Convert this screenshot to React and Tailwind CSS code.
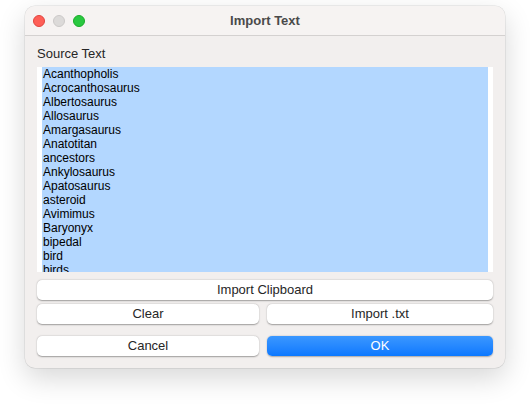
import React from 'react';

const words = [
  'Acanthopholis',
  'Acrocanthosaurus',
  'Albertosaurus',
  'Allosaurus',
  'Amargasaurus',
  'Anatotitan',
  'ancestors',
  'Ankylosaurus',
  'Apatosaurus',
  'asteroid',
  'Avimimus',
  'Baryonyx',
  'bipedal',
  'bird',
  'birds',
  'Brachiosaurus',
];

const font = { fontFamily: '"Liberation Sans", Arial, sans-serif' };

const Btn = ({ children, className = '' }) => (
  <div
    className={`h-[20px] rounded-[5px] bg-white flex items-center justify-center text-[13px] text-[#262626] shadow-[0_0.5px_1.5px_rgba(0,0,0,0.35)] ${className}`}
  >
    {children}
  </div>
);

const App = () => {
  return (
    <div className="w-[530px] h-[411px] bg-white pt-[6px] pl-[25px]" style={font}>
      <div className="w-[480px] h-[362px] rounded-[10px] bg-[#f2efee] shadow-[0_10px_28px_rgba(0,0,0,0.16),0_0_0_0.5px_rgba(0,0,0,0.12)] overflow-hidden flex flex-col">
        {/* title bar */}
        <div className="relative h-[30px] bg-[#f6f3f2] border-b border-[#d4d1d0] flex items-center justify-center shrink-0">
          <div className="absolute left-[8px] top-[9px] flex gap-[8px]">
            <span className="w-[12px] h-[12px] rounded-full bg-[#fe5f57] border border-[#e0443e]" />
            <span className="w-[12px] h-[12px] rounded-full bg-[#dcdad9] border border-[#cbc9c8]" />
            <span className="w-[12px] h-[12px] rounded-full bg-[#29c840] border border-[#1aab29]" />
          </div>
          <span className="text-[13px] font-bold text-[#4a4a4a]">Import Text</span>
        </div>

        <div className="flex flex-col px-[12px]">
          <div className="mt-[10px] h-[16px] leading-[16px] text-[13px] text-[#262626]">Source Text</div>
          <div className="mt-[5px] h-[205px] bg-white px-[5px] overflow-hidden">
            <div className="h-full bg-[#b3d7ff] pl-[1px] text-[12px] leading-[14px] text-black">
              {words.map((w) => (
                <div key={w}>{w}</div>
              ))}
            </div>
          </div>

          <Btn className="mt-[8px]">Import Clipboard</Btn>
          <div className="mt-[4px] flex gap-[8px]">
            <Btn className="w-[222px]">Clear</Btn>
            <Btn className="flex-1">Import .txt</Btn>
          </div>
          <div className="mt-[12px] flex gap-[8px]">
            <Btn className="w-[222px]">Cancel</Btn>
            <div className="flex-1 h-[20px] rounded-[5px] bg-gradient-to-b from-[#3a97ff] to-[#0a78ff] flex items-center justify-center text-[13px] font-medium text-white shadow-[0_0.5px_1.5px_rgba(0,0,0,0.3)]">
              OK
            </div>
          </div>
        </div>
      </div>
    </div>
  );
};

export default App;
